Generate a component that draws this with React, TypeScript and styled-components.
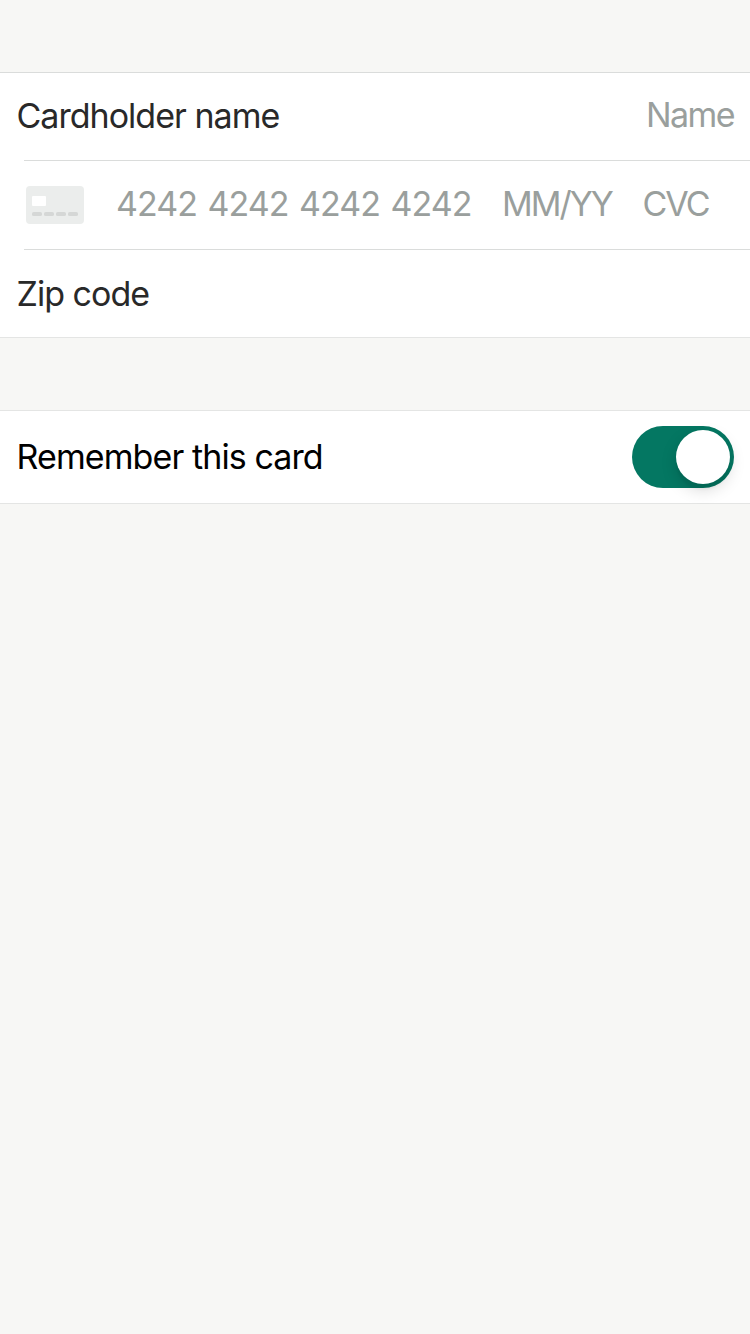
import React from 'react';
import styled, { createGlobalStyle } from 'styled-components';

const GlobalStyle = createGlobalStyle`
  * { box-sizing: border-box; }
  html, body { margin: 0; min-height: 100%; background: #f7f7f5; }
  body { font-family: Inter, "Liberation Sans", sans-serif; font-size: 34px; font-weight: 400; line-height: 40px; }
`;

const Screen = styled.main`
  width: 750px;
  min-height: 1334px;
  padding-top: 72px;
  display: flex;
  flex-direction: column;
  gap: 72px;
  background: #f7f7f5;
`;

const Group = styled.section<{ $line: string }>`
  background: #fff;
  border-top: 1px solid ${(p) => p.$line};
  border-bottom: 1px solid #e4e5e4;
`;

const Row = styled.div<{ $height: number; $top: number }>`
  height: ${(p) => p.$height}px;
  padding: ${(p) => p.$top}px 16px 0 16px;
  display: flex;
  justify-content: space-between;
  align-items: flex-start;
`;

const Divider = styled.div`
  height: 1px;
  margin-left: 24px;
  background: #dadcdb;
`;

const Label = styled.span<{ $color?: string; $tracking: number }>`
  padding-left: 0.5px;
  color: ${(p) => p.$color ?? '#292929'};
  letter-spacing: ${(p) => p.$tracking}px;
  white-space: nowrap;
`;

const Placeholder = styled.span<{ $tracking: number; $indent?: number; $width?: number }>`
  flex: none;
  width: ${(p) => (p.$width ? `${p.$width}px` : 'auto')};
  margin-left: ${(p) => p.$indent ?? 0}px;
  color: #9a9f9d;
  letter-spacing: ${(p) => p.$tracking}px;
  white-space: nowrap;
`;

const NameField = styled(Placeholder)`
  margin-top: -1px;
`;

const CardNumber = styled(Placeholder)`
  word-spacing: 2.1px;
`;

const CardRow = styled(Row)`
  justify-content: flex-start;
  padding-left: 26px;
`;

const CardIcon = styled.svg`
  display: block;
  flex: none;
  margin-top: 2px;
`;

const Switch = styled.button`
  width: 102px;
  height: 62px;
  padding: 4px;
  border: 0;
  border-radius: 31px;
  display: flex;
  justify-content: flex-end;
  background: #047762;
`;

const Knob = styled.span`
  width: 54px;
  height: 54px;
  border-radius: 50%;
  background: #fff;
  box-shadow: 0 6px 16px rgba(0, 0, 0, 0.15), 0 6px 2px rgba(0, 0, 0, 0.04);
`;

const RememberLabel = styled(Label)`
  margin-top: 11px;
`;

export default function App() {
  return (
    <>
      <GlobalStyle />
      <Screen>
        <Group $line="#dadcdb">
          <Row $height={87} $top={23}>
            <Label $tracking={-0.98}>Cardholder name</Label>
            <NameField $tracking={-1.6}>Name</NameField>
          </Row>
          <Divider />
          <CardRow $height={88} $top={23}>
            <CardIcon width="58" height="38" viewBox="0 0 58 38">
              <rect width="58" height="38" rx="4" fill="#ebedec" />
              <rect x="6" y="10" width="14" height="10" rx="1" fill="#fff" />
              {[6, 18, 30, 42].map((x) => (
                <rect key={x} x={x} y="26" width="10" height="4" rx="1.6" fill="#d5d7d6" />
              ))}
            </CardIcon>
            <CardNumber $tracking={-1} $indent={32} $width={386}>4242 4242 4242 4242</CardNumber>
            <Placeholder $tracking={-2} $width={140.5}>MM/YY</Placeholder>
            <Placeholder $tracking={-2}>CVC</Placeholder>
          </CardRow>
          <Divider />
          <Row $height={87} $top={24}>
            <Label $tracking={-0.98}>Zip code</Label>
          </Row>
        </Group>
        <Group $line="#e4e5e4">
          <Row $height={92} $top={15}>
            <RememberLabel $color="#000" $tracking={-0.9}>Remember this card</RememberLabel>
            <Switch role="switch" aria-checked="true" aria-label="Remember this card">
              <Knob />
            </Switch>
          </Row>
        </Group>
      </Screen>
    </>
  );
}
